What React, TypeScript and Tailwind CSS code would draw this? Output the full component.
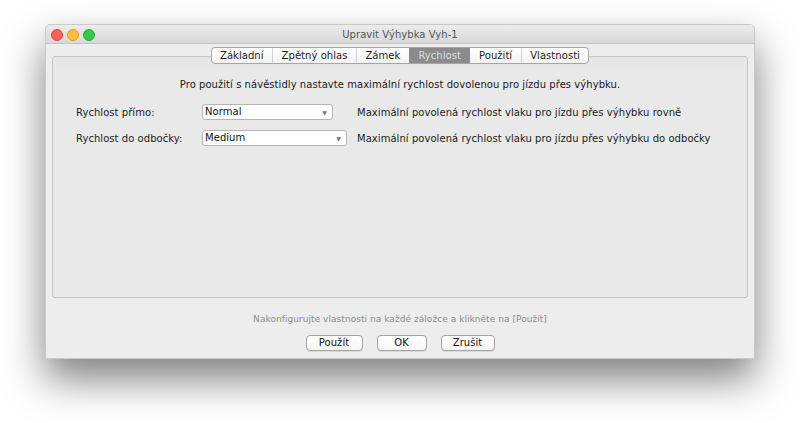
import React from 'react'

const tabs = ['Základní', 'Zpětný ohlas', 'Zámek', 'Rychlost', 'Použití', 'Vlastnosti']

function Combo ({ value, width }: { value: string, width: string }) {
  return (
    <div className={`flex h-[16px] ${width} items-stretch rounded-[3px] border border-[#b4b4b4] bg-white`}>
      <span className="flex-1 pl-[2px] leading-[14px] text-[#111]">{value}</span>
      <span className="flex w-[15px] items-center justify-center text-[6px] text-[#777]">▼</span>
    </div>
  )
}

function Row ({ label, value, width, hint }: { label: string, value: string, width: string, hint: string }) {
  return (
    <div className="grid h-[16px] grid-cols-[126px_155px_1fr] items-center">
      <span className="text-[#222]">{label}</span>
      <Combo value={value} width={width} />
      <span className="text-[#222]">{hint}</span>
    </div>
  )
}

function Button ({ children, width }: { children: React.ReactNode, width: string }) {
  return (
    <button className={`h-[16px] ${width} rounded-[4px] border border-[#a3a3a3] bg-gradient-to-b from-white to-[#f6f6f6] leading-[14px] text-[#111] shadow-[0_1px_0_rgba(0,0,0,0.08)]`}>
      {children}
    </button>
  )
}

export default function App () {
  return (
    <div
      className="h-[423px] w-[800px] overflow-hidden bg-white pl-[45px] pt-[24px] text-[10px] tracking-[0.05px]"
      style={{ fontFamily: '"DejaVu Sans", "Noto Sans", sans-serif' }}
    >
      <div className="flex h-[335px] w-[710px] flex-col overflow-hidden rounded-t-[5px] border border-[#c9c9c9] bg-[#ededed] shadow-[0_20px_40px_rgba(0,0,0,0.5)]">
        <div className="flex h-[19px] shrink-0 items-center border-b border-[#c4c4c4] bg-gradient-to-b from-[#ececec] to-[#d8d8d8] px-[5px] pt-[1px]">
          <div className="flex gap-[4px]">
            <span className="size-[12px] rounded-full border border-[#e2463f] bg-[#fc605c]" />
            <span className="size-[12px] rounded-full border border-[#e1a116] bg-[#fdbc40]" />
            <span className="size-[12px] rounded-full border border-[#2aa83a] bg-[#34c84a]" />
          </div>
          <span className="flex-1 pr-[44px] text-center text-[#555]">Upravit Výhybka Vyh-1</span>
        </div>

        <div className="flex flex-1 flex-col px-[6px] pt-[3px]">
          <div className="relative z-10 flex justify-center">
            <div className="flex h-[17px] overflow-hidden rounded-[4px] border border-[#a6a6a6] bg-gradient-to-b from-white to-[#f3f3f3]">
              {tabs.map((t, i) => (
                <span
                  key={t}
                  className={
                    t === 'Rychlost'
                      ? 'flex items-center bg-[#8b8b8b] px-[9.5px] text-[#dcdcdc]'
                      : `flex items-center px-[8.5px] text-[#1e1e1e] ${i > 0 && tabs[i - 1] !== 'Rychlost' ? 'border-l border-[#d4d4d4]' : ''}`
                  }
                >
                  {t}
                </span>
              ))}
            </div>
          </div>

          <div className="-mt-[8px] flex h-[242px] flex-col rounded-[3px] border border-[#c6c6c6] bg-gradient-to-b from-[#e4e4e4] to-[#e9e9e9] to-[12px] pt-[20px]">
            <p className="text-center text-[#1a1a1a]">Pro použití s návěstidly nastavte maximální rychlost dovolenou pro jízdu přes výhybku.</p>
            <div className="mt-[12px] flex flex-col gap-[10px] pl-[23px]">
              <Row label="Rychlost přímo:" value="Normal" width="w-[131px]" hint="Maximální povolená rychlost vlaku pro jízdu přes výhybku rovně" />
              <Row label="Rychlost do odbočky:" value="Medium" width="w-[145px]" hint="Maximální povolená rychlost vlaku pro jízdu přes výhybku do odbočky" />
            </div>
          </div>

          <p className="mt-[15px] text-center text-[9px] text-[#8c8c8c]">Nakonfigurujte vlastnosti na každé záložce a klikněte na [Použít]</p>
          <div className="mt-[8px] flex justify-center gap-[14px]">
            <Button width="w-[57px]">Použít</Button>
            <Button width="w-[50px]">OK</Button>
            <Button width="w-[54px]">Zrušit</Button>
          </div>
        </div>
      </div>
    </div>
  )
}
